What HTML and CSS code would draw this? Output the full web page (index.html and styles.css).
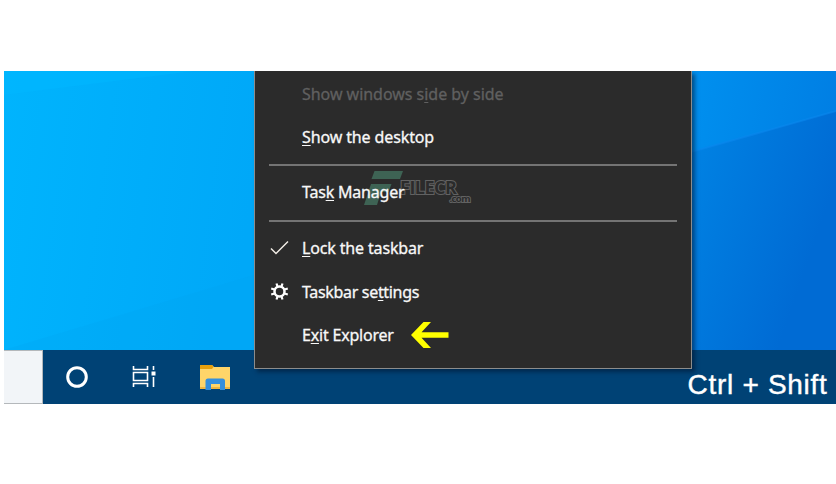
FILE: index.html
```html
<!DOCTYPE html>
<html lang="en">
<head>
<meta charset="utf-8">
<title>Taskbar menu</title>
<link rel="stylesheet" href="styles.css">
</head>
<body>
<main class="desktop">
  <svg class="wallpaper" viewBox="0 0 832 279" preserveAspectRatio="none" aria-hidden="true">
    <defs>
      <linearGradient id="left" x1="0" y1="0" x2="1" y2="0.15"><stop offset="0" stop-color="#00b4fd"/><stop offset="1" stop-color="#00a8f8"/></linearGradient>
      <linearGradient id="right" gradientUnits="userSpaceOnUse" x1="687" y1="60" x2="832" y2="110"><stop offset="0" stop-color="#0083e4"/><stop offset="1" stop-color="#006bd4"/></linearGradient>
      <linearGradient id="beam" gradientUnits="userSpaceOnUse" x1="687" y1="0" x2="832" y2="30"><stop offset="0" stop-color="#0090ef"/><stop offset="1" stop-color="#007fe4"/></linearGradient>
    </defs>
    <rect width="260" height="279" fill="url(#left)"/>
    <path d="M0 0H190L0 24Z" fill="#00b8ff" opacity=".5"/>
    <path d="M0 279L250 204V279Z" fill="#00a5f0" opacity=".25"/>
    <rect x="680" width="152" height="279" fill="url(#right)"/>
    <path d="M680 0H832V40L680 83Z" fill="url(#beam)"/>
    <path d="M680 83L832 40" stroke="#0a88ee" stroke-width="2" opacity=".6"/>
  </svg>
  <footer class="taskbar">
    <div class="search"></div>
    <svg class="cortana" width="24" height="24" viewBox="0 0 24 24"><circle cx="12" cy="12" r="9.300" fill="none" stroke="#fff" stroke-width="3"/></svg>
    <svg class="taskview" width="24" height="22" viewBox="0 0 24 22" fill="none" stroke="#fff" stroke-width="1.600"><path d="M1.500 0V3.500H15.500V0M1.500 21V17.500H15.500V21M1.500 6.500H15.500V14.500H1.500ZM21.500 0V4M21.500 11V21"/><path d="M19.500 5.500H23.500V9.500H19.500Z" fill="#fff" stroke="none"/></svg>
    <svg class="folder" width="30" height="25" viewBox="0 0 30 25"><path d="M0 1.200Q0 0 1.200 0H12L14 2H30V24H0Z" fill="#ffd569"/><path d="M0 4V1Q0 0 1 0H12L13.500 2L12 4Z" fill="#e8a00c"/><path d="M0 22H30V24H0Z" fill="#eeb540"/><path d="M5.500 25V16Q5.500 13.500 8 13.500H22.500Q25 13.500 25 16V25H20V19H11V25Z" fill="#348fdd"/></svg>
    <span class="shortcut">Ctrl + Shift</span>
  </footer>
  <nav class="menu">
    <div class="item disabled"><span class="label">Show windows s<u>i</u>de by side</span></div>
    <div class="item"><span class="label show"><u>S</u>how the desktop</span></div>
    <hr>
    <div class="item"><span class="label manager">Tas<u>k</u> Manager</span></div>
    <hr>
    <div class="item">
      <svg class="icon" width="20" height="20" viewBox="0 0 20 20"><path d="M1 10.500L6 15.500L18 3.500" fill="none" stroke="#f1ece6" stroke-width="1.500"/></svg>
      <span class="label lock"><u>L</u>ock the taskbar</span>
    </div>
    <div class="item">
      <svg class="icon" width="20" height="20" viewBox="0 0 20 20" fill="none" stroke="#fff"><circle cx="9.500" cy="9.500" r="5" stroke-width="2.500"/><path d="M7.500 4.500L6.500 1.500M11.500 4.500L12.500 1.500M7.500 14.500L6.500 17.500M11.500 14.500L12.500 17.500M4.500 7.500L1.200 6.500M4.500 11.500L1.200 12.500M14.500 7.500L17.800 6.500M14.500 11.500L17.800 12.500" stroke-width="2.200"/></svg>
      <span class="label settings">Taskbar se<u>t</u>tings</span>
    </div>
    <div class="item">
      <span class="label exit">E<u>x</u>it Explorer</span>
      <svg class="arrow" width="38" height="26" viewBox="0 0 38 26"><path d="M0 13L12.500 0H20L10.500 10.300H37.500V15.700H10.500L20 26H12.500Z" fill="#ff0"/></svg>
    </div>
  </nav>
  <div class="watermark">
    <svg width="40" height="35" viewBox="0 0 40 35" aria-hidden="true"><path d="M10.500 0H39L36 8H7.500ZM7 13H27.500L24.500 21H17L13 34H0Z" fill="#4b8c72" opacity=".58"/></svg>
    <span class="brand">FILECR</span><span class="domain">.com</span>
  </div>
</main>
</body>
</html>
```
FILE: styles.css
```css
* { box-sizing: border-box; }
body { margin: 0; background: #fff; overflow: hidden; }
.desktop {
  position: relative;
  display: flex;
  flex-direction: column;
  width: 832px;
  height: 333px;
  margin: 71px 0 0 4px;
  overflow: hidden;
}
.wallpaper { display: block; width: 832px; height: 279px; }
.taskbar {
  display: flex;
  align-items: center;
  height: 54px;
  background: #004275;
}
.search {
  width: 39px;
  height: 54px;
  background: #f2f5f8;
  border: solid #b4b8bb;
  border-width: 1px 1px 1px 0;
}
.cortana { margin-left: 22px; }
.taskview { margin-left: 43px; }
.folder { margin-left: 44px; }
.shortcut {
  margin: 16px 8.5px 0 auto;
  color: #fff;
  font: 28px/32px "Liberation Sans", Arial, sans-serif;
  letter-spacing: .7px;
  -webkit-text-stroke: .4px #fff;
  white-space: nowrap;
}
.menu {
  position: absolute;
  top: 0;
  left: 249.5px;
  width: 438px;
  height: 298px;
  padding-top: 1px;
  background: #2b2b2b;
  border: solid #8c8c8c;
  border-width: 0 1px 1px;
  box-shadow: 3px 3px 4px rgba(0, 15, 40, .5);
  color: #f8f8f8;
  font: 16px/24px "Noto Sans", sans-serif;
}
.item {
  display: grid;
  grid-template-columns: 20px max-content max-content;
  align-items: center;
  height: 43.5px;
  padding-left: 15px;
}
.icon { grid-column: 1; }
.label {
  grid-column: 2;
  margin-left: 12.5px;
  letter-spacing: -.03px;
  -webkit-text-stroke: .3px currentColor;
  white-space: nowrap;
}
.label u { text-decoration-thickness: 1px; text-underline-offset: 2px; }
.show { letter-spacing: -.12px; }
.manager { position: relative; z-index: 2; margin-top: -1px; letter-spacing: -.2px; }
.lock { letter-spacing: -.15px; }
.settings { letter-spacing: -.32px; }
.exit { letter-spacing: -.2px; }
.disabled { color: #606060; }
.arrow { margin-left: 17px; }
hr {
  height: 2px;
  margin: 5px 14px;
  border: 0;
  background: #747474;
}
.watermark {
  position: absolute;
  top: 100px;
  left: 360px;
  display: flex;
  height: 36px;
  color: #2b2b2b;
  font-family: "Open Sans", sans-serif;
  font-weight: 700;
  -webkit-text-stroke: 2px #626262;
  paint-order: stroke fill;
}
.brand { margin: 6px 0 0 -4px; font-size: 18px; line-height: 20px; letter-spacing: -.5px; }
.domain { margin: 21px 0 0 -7px; font-size: 9.5px; line-height: 14px; letter-spacing: -.6px; }
```
